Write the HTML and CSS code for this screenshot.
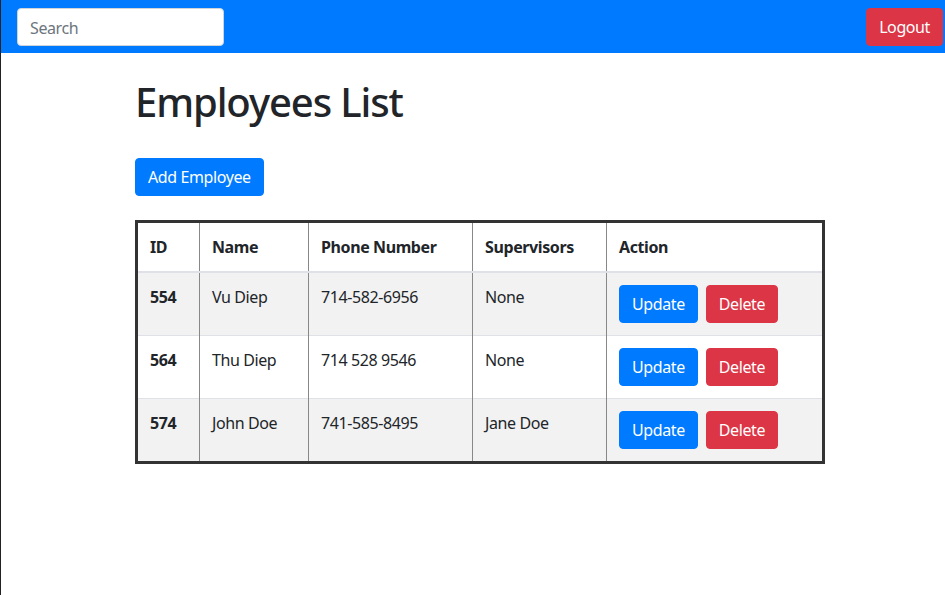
FILE: index.html
```html
<!DOCTYPE html>
<html lang="en">
<head>
<meta charset="utf-8">
<title>Employees List</title>
<link rel="stylesheet" href="styles.css">
</head>
<body>
<div class="page">
  <nav class="navbar">
    <input class="search" type="text" placeholder="Search">
    <button class="btn btn-danger logout">Logout</button>
  </nav>
  <main class="container">
    <h1 class="title">Employees List</h1>
    <div class="toolbar">
      <button class="btn btn-primary">Add Employee</button>
    </div>
    <table class="table">
      <thead>
        <tr>
          <th class="c-id">ID</th>
          <th class="c-name">Name</th>
          <th class="c-phone">Phone Number</th>
          <th class="c-sup">Supervisors</th>
          <th class="c-act">Action</th>
        </tr>
      </thead>
      <tbody>
        <tr class="odd">
          <th>554</th>
          <td>Vu Diep</td>
          <td>714-582-6956</td>
          <td>None</td>
          <td><div class="actions"><button class="btn btn-primary">Update</button><button class="btn btn-danger">Delete</button></div></td>
        </tr>
        <tr>
          <th>564</th>
          <td>Thu Diep</td>
          <td>714 528 9546</td>
          <td>None</td>
          <td><div class="actions"><button class="btn btn-primary">Update</button><button class="btn btn-danger">Delete</button></div></td>
        </tr>
        <tr class="odd">
          <th>574</th>
          <td>John Doe</td>
          <td>741-585-8495</td>
          <td>Jane Doe</td>
          <td><div class="actions"><button class="btn btn-primary">Update</button><button class="btn btn-danger">Delete</button></div></td>
        </tr>
      </tbody>
    </table>
  </main>
</div>
</body>
</html>
```
FILE: styles.css
```css
* { box-sizing: border-box; }
html, body { margin: 0; padding: 0; height: 100%; }
body {
  font-family: "Noto Sans", "Open Sans", sans-serif;
  font-size: 16px;
  line-height: 24px;
  letter-spacing: -0.4px;
  color: #212529;
  background: #fff;
}
.page {
  min-height: 595px;
  border-left: 1px solid #222;
}
.navbar {
  height: 53px;
  background: #007bff;
  display: flex;
  align-items: center;
  justify-content: space-between;
  padding: 0 2px 0 16px;
}
.search {
  width: 207px;
  height: 38px;
  border: 1px solid #ced4da;
  border-radius: 4px;
  padding: 7px 12px 5px;
  font: inherit;
  letter-spacing: -0.4px;
  color: #495057;
  background: #fff;
}
.search::placeholder { color: #6c757d; }
.btn {
  font: inherit;
  letter-spacing: -0.4px;
  height: 38px;
  padding: 0 12px;
  border: 1px solid transparent;
  border-radius: 4px;
  color: #fff;
  cursor: pointer;
}
.btn-primary { background: #007bff; border-color: #007bff; }
.btn-danger { background: #dc3545; border-color: #dc3545; }
.container {
  margin-left: 134px;
  width: 690px;
}
.title {
  margin: 25px 0 32px;
  font-size: 40px;
  line-height: 48px;
  font-weight: 500;
  letter-spacing: -1.1px;
}
.toolbar { margin-bottom: 24px; }
.table {
  width: 690px;
  border-collapse: collapse;
  border: 3px solid #333;
}
.table th, .table td {
  text-align: left;
  vertical-align: top;
  padding: 12px;
  border-left: 1px solid #888;
  border-top: 1px solid #dee2e6;
}
.table thead th {
  border-bottom: 2px solid #dee2e6;
  font-weight: 700;
  padding: 12px;
}
.table tbody th { font-weight: 700; }
.table tr.odd { background: #f2f2f2; }
.c-id { width: 63px; }
.c-name { width: 109px; }
.c-phone { width: 164px; }
.c-sup { width: 134px; }
.actions { display: flex; gap: 8px; }
```
